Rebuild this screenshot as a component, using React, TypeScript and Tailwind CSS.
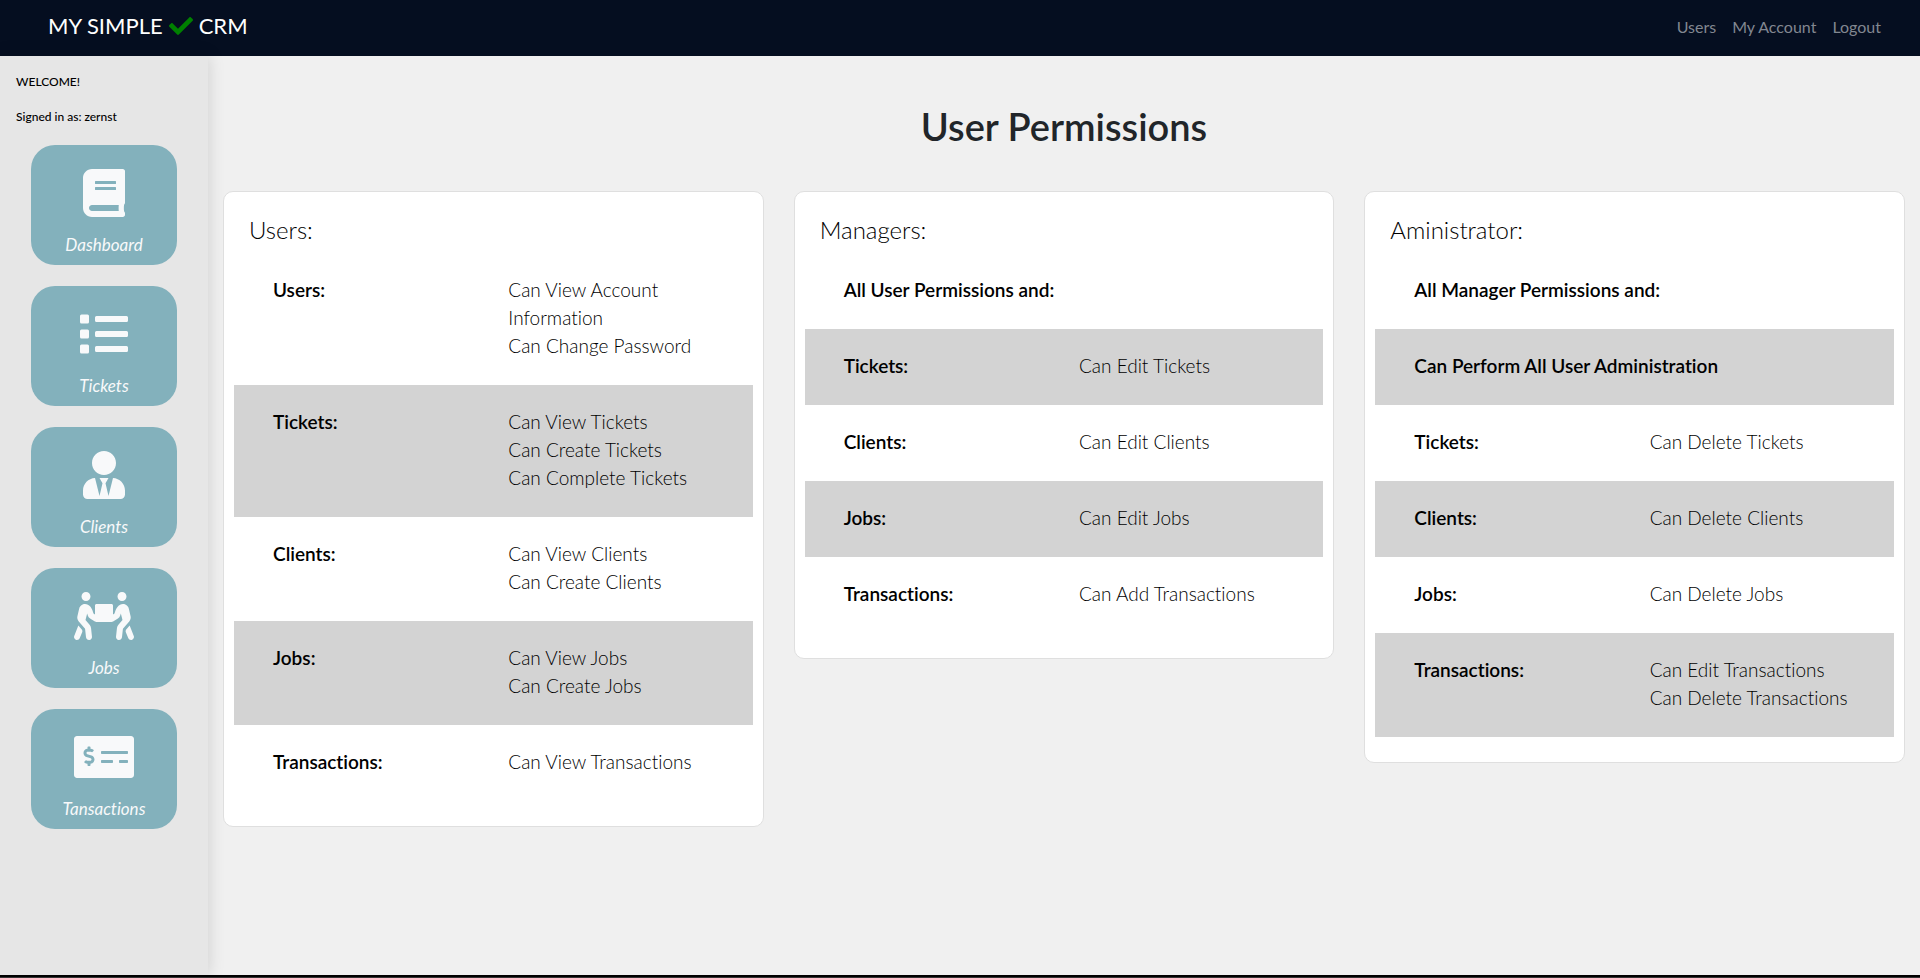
import { FaBook, FaCheck, FaList, FaMoneyCheckAlt, FaPeopleCarry, FaUserTie } from "react-icons/fa";
import type { IconType } from "react-icons";

type Permission = { label: string; items?: string[] };
type Role = { title: string; permissions: Permission[] };

const navLinks = ["Users", "My Account", "Logout"];

const sideLinks: { label: string; icon: IconType }[] = [
  { label: "Dashboard", icon: FaBook },
  { label: "Tickets", icon: FaList },
  { label: "Clients", icon: FaUserTie },
  { label: "Jobs", icon: FaPeopleCarry },
  { label: "Tansactions", icon: FaMoneyCheckAlt },
];

const roles: Role[] = [
  {
    title: "Users:",
    permissions: [
      { label: "Users:", items: ["Can View Account Information", "Can Change Password"] },
      { label: "Tickets:", items: ["Can View Tickets", "Can Create Tickets", "Can Complete Tickets"] },
      { label: "Clients:", items: ["Can View Clients", "Can Create Clients"] },
      { label: "Jobs:", items: ["Can View Jobs", "Can Create Jobs"] },
      { label: "Transactions:", items: ["Can View Transactions"] },
    ],
  },
  {
    title: "Managers:",
    permissions: [
      { label: "All User Permissions and:" },
      { label: "Tickets:", items: ["Can Edit Tickets"] },
      { label: "Clients:", items: ["Can Edit Clients"] },
      { label: "Jobs:", items: ["Can Edit Jobs"] },
      { label: "Transactions:", items: ["Can Add Transactions"] },
    ],
  },
  {
    title: "Aministrator:",
    permissions: [
      { label: "All Manager Permissions and:" },
      { label: "Can Perform All User Administration" },
      { label: "Tickets:", items: ["Can Delete Tickets"] },
      { label: "Clients:", items: ["Can Delete Clients"] },
      { label: "Jobs:", items: ["Can Delete Jobs"] },
      { label: "Transactions:", items: ["Can Edit Transactions", "Can Delete Transactions"] },
    ],
  },
];

function Header() {
  return (
    <header className="flex h-14 items-center justify-between bg-[#050e20] pl-12 pr-[39px]">
      <a href="#home" className="flex items-center gap-1.5 pb-1 text-[22px] leading-8 text-white">
        <span>MY SIMPLE</span>
        <FaCheck className="size-6 text-[#008000]" aria-hidden="true" />
        <span>CRM</span>
      </a>
      <nav className="flex gap-4 pb-0.5 text-base text-[#828790]">
        {navLinks.map((link) => (
          <a key={link} href="#nav">
            {link}
          </a>
        ))}
      </nav>
    </header>
  );
}

function Sidebar() {
  return (
    <aside className="w-52 shrink-0 bg-[#e6e6e6] px-4 pt-4 shadow-[0_0_16px_rgba(0,0,0,0.15)]">
      <p className="text-xs leading-5 font-medium text-black">WELCOME!</p>
      <p className="mt-[15px] text-xs leading-5 font-medium text-black">Signed in as: zernst</p>
      <nav className="mt-[18px] flex flex-col gap-[21px] px-[15px]">
        {sideLinks.map(({ label, icon: Icon }) => (
          <a
            key={label}
            href="#section"
            className="flex h-[120px] flex-col items-center rounded-3xl bg-[#83b1bc] pt-6 text-[#f8f9fa]"
          >
            <Icon className="h-12 w-[60px]" aria-hidden="true" />
            <span className="mt-4 text-[17px] leading-6 italic">{label}</span>
          </a>
        ))}
      </nav>
    </aside>
  );
}

function RoleCard({ title, permissions }: Role) {
  return (
    <section className="rounded-[10px] border border-[#dfdfdf] bg-white px-2.5 pb-[25px] text-black">
      <h2 className="px-[15px] pt-[22px] pb-[7px] text-2xl leading-8 font-light">{title}</h2>
      <dl className="text-[19px] leading-7">
        {permissions.map(({ label, items }) => (
          <div key={label} className="flex px-6 pt-[23px] pb-[25px] even:bg-[#d3d3d3]">
            <dt className={items ? "w-1/2 px-[15px] font-semibold" : "w-full px-[15px] font-semibold"}>{label}</dt>
            {items && (
              <dd className="w-1/2 px-[15px] font-light">
                {items.map((item) => (
                  <p key={item}>{item}</p>
                ))}
              </dd>
            )}
          </div>
        ))}
      </dl>
    </section>
  );
}

export default function App() {
  return (
    <div className="flex min-h-screen flex-col bg-[#f0f0f0] font-['Lato','Open_Sans',sans-serif] [font-variant-ligatures:none]">
      <Header />
      <div className="flex grow">
        <Sidebar />
        <main className="grow px-[15px] pb-8">
          <h1 className="pt-[46px] text-center text-[38px] leading-[48px] font-semibold text-[#212529]">User Permissions</h1>
          <div className="mt-[41px] grid grid-cols-3 items-start gap-[30px]">
            {roles.map((role) => (
              <RoleCard key={role.title} {...role} />
            ))}
          </div>
        </main>
      </div>
      <footer className="h-[3px] border-b border-[#333333] bg-black" />
    </div>
  );
}
